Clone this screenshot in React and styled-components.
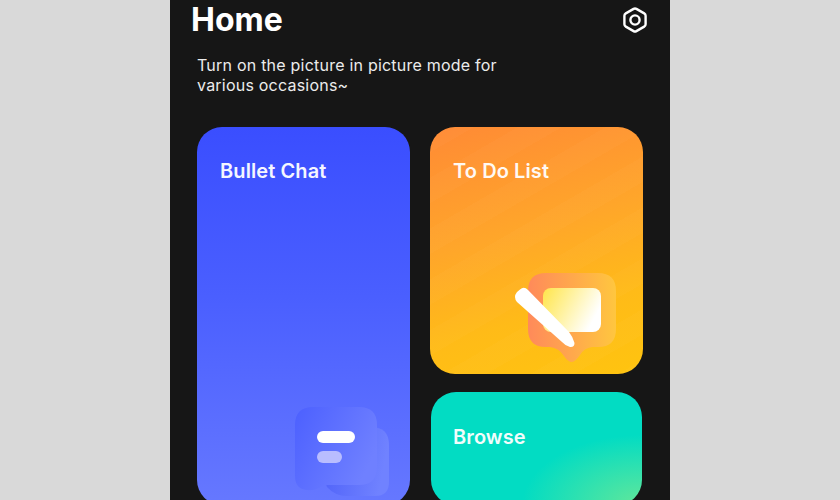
import React from "react";
import styled, { createGlobalStyle } from "styled-components";

const Global = createGlobalStyle`
  html, body { margin: 0; padding: 0; background: #d9d9d9; }
  body { font-family: Inter, "Liberation Sans", sans-serif; }
`;

const Page = styled.div`
  width: 840px;
  height: 500px;
  display: flex;
  justify-content: center;
  overflow: hidden;
  background: #d9d9d9;
`;

const Phone = styled.main`
  width: 500px;
  height: 500px;
  box-sizing: border-box;
  background: #161616;
  overflow: hidden;
  padding-right: 27px;
`;

const Header = styled.header`
  display: flex;
  justify-content: space-between;
  align-items: center;
  height: 40px;
  padding-left: 21px;
`;

const Title = styled.h1`
  margin: 0;
  color: #fff;
  font-size: 32px;
  line-height: 40px;
  font-weight: 700;
`;

const Gear = styled.svg`
  width: 28px;
  height: 28px;
  margin-right: -6px;
  display: block;
`;

const Intro = styled.p`
  margin: 15px 0 0 27px;
  color: #ececec;
  font-size: 16px;
  line-height: 20px;
  font-weight: 400;
  letter-spacing: 0.22px;
  width: 330px;
`;

const Grid = styled.section`
  display: grid;
  grid-template-columns: 213px 213px;
  grid-template-rows: 247px 113px;
  column-gap: 20px;
  row-gap: 18px;
  margin: 32px 0 0 27px;
`;

const Card = styled.article`
  display: flex;
  flex-direction: column;
  box-sizing: border-box;
  border-radius: 25px;
  padding: 32px 0 0 23px;
  grid-row: ${(p) => p.$rows || "auto"};
  background: ${(p) => p.$bg};
`;

const CardTitle = styled.h2`
  margin: 0;
  color: #fff;
  font-size: 20px;
  line-height: 25px;
  font-weight: 600;
  letter-spacing: 0.1px;
  opacity: 0.95;
`;

const BrowseCard = styled(Card)`
  margin: 0 1px;
  padding-top: 33px;
  padding-left: 22px;
`;

const BulletIcon = styled.svg`
  display: block;
  width: 96px;
  height: 92px;
  margin-top: auto;
  margin-bottom: 7px;
  margin-left: 75px;
`;

const TodoIcon = styled.svg`
  display: block;
  width: 106px;
  height: 92px;
  margin-top: auto;
  margin-bottom: 10px;
  margin-left: 59px;
`;

export default function App() {
  return (
    <Page>
      <Global />
      <Phone>
        <Header>
          <Title>Home</Title>
          <Gear viewBox="0 0 28 28" fill="none">
            <path
              d="M12.6 2.9 Q14 2.1 15.4 2.9 L23.2 7.4 Q24.6 8.2 24.6 9.8 V18.2 Q24.6 19.8 23.2 20.6 L15.4 25.1 Q14 25.9 12.6 25.1 L4.8 20.6 Q3.4 19.8 3.4 18.2 V9.8 Q3.4 8.2 4.8 7.4 Z"
              stroke="#fff"
              strokeWidth="2.4"
              strokeLinejoin="round"
            />
            <circle cx="14" cy="14" r="4.6" stroke="#fff" strokeWidth="2.4" />
          </Gear>
        </Header>
        <Intro>Turn on the picture in picture mode for various occasions~</Intro>
        <Grid>
          <Card $rows="span 2" $bg="linear-gradient(180deg, #3a4eff 0%, #4a5fff 45%, #6678ff 100%)">
            <CardTitle>Bullet Chat</CardTitle>
            <BulletIcon viewBox="0 0 96 92" fill="none">
              <defs>
                <linearGradient id="bFront" x1="0" y1="0" x2="1" y2="0.5">
                  <stop offset="0" stopColor="#4c60ff" />
                  <stop offset="1" stopColor="#6f80ff" />
                </linearGradient>
                <linearGradient id="bBack" x1="0" y1="0" x2="1" y2="0.2">
                  <stop offset="0" stopColor="#4c5ff8" />
                  <stop offset="1" stopColor="#7082ff" />
                </linearGradient>
              </defs>
              <path
                d="M40 21 H76 Q94 21 94 39 V76 Q94 90 80 90 H52 Q40 90 32 81 L28 70 Z"
                fill="url(#bBack)"
              />
              <path
                d="M18 1 H64 Q82 1 82 19 V61 Q82 79 64 79 H32 Q28 79 24 82 Q18 85 12 84 Q0 83 0 70 V19 Q0 1 18 1 Z"
                fill="url(#bFront)"
              />
              <rect x="22" y="25" width="38" height="12" rx="6" fill="#fff" />
              <rect x="22" y="45" width="25" height="12" rx="6" fill="#b9bdff" />
            </BulletIcon>
          </Card>
          <Card $bg="repeating-linear-gradient(150deg, rgba(255,255,255,0.018) 0 22px, rgba(255,255,255,0) 22px 44px), linear-gradient(165deg, #ff8a35 0%, #ffa62a 42%, #ffbb18 72%, #ffc40f 100%)">
            <CardTitle>To Do List</CardTitle>
            <TodoIcon viewBox="0 0 106 92" fill="none">
              <defs>
                <linearGradient id="oBack" x1="0" y1="0" x2="1" y2="0">
                  <stop offset="0" stopColor="#ff8a5a" />
                  <stop offset="1" stopColor="#ffc63f" />
                </linearGradient>
                <linearGradient id="oInner" x1="0" y1="0" x2="1" y2="0.4">
                  <stop offset="0" stopColor="#ffe54a" />
                  <stop offset="0.45" stopColor="#fff19a" />
                  <stop offset="1" stopColor="#ffffff" />
                </linearGradient>
              </defs>
              <path
                d="M34 1 H86 Q104 1 104 19 V57 Q104 75 86 75 H80 Q72 76 68 83 Q63 90 60 90 Q56 90 52 84 Q47 76 38 75 H34 Q16 75 16 57 V19 Q16 1 34 1 Z"
                fill="url(#oBack)"
              />
              <rect x="31" y="16" width="58" height="44" rx="8" fill="url(#oInner)" />
              <path
                d="M5 30 Q1 25 5 20 L8 17.5 Q12 14 16 18 L57 60 Q61 65 62.5 71 Q62.5 75.5 58 75 Q53 73.5 50 70 Z"
                fill="#fff"
              />
            </TodoIcon>
          </Card>
          <BrowseCard $bg="radial-gradient(120px 70px at 100% 100%, #62e79a 0%, rgba(98,231,154,0) 100%), #02dcc3">
            <CardTitle>Browse</CardTitle>
          </BrowseCard>
        </Grid>
      </Phone>
    </Page>
  );
}
